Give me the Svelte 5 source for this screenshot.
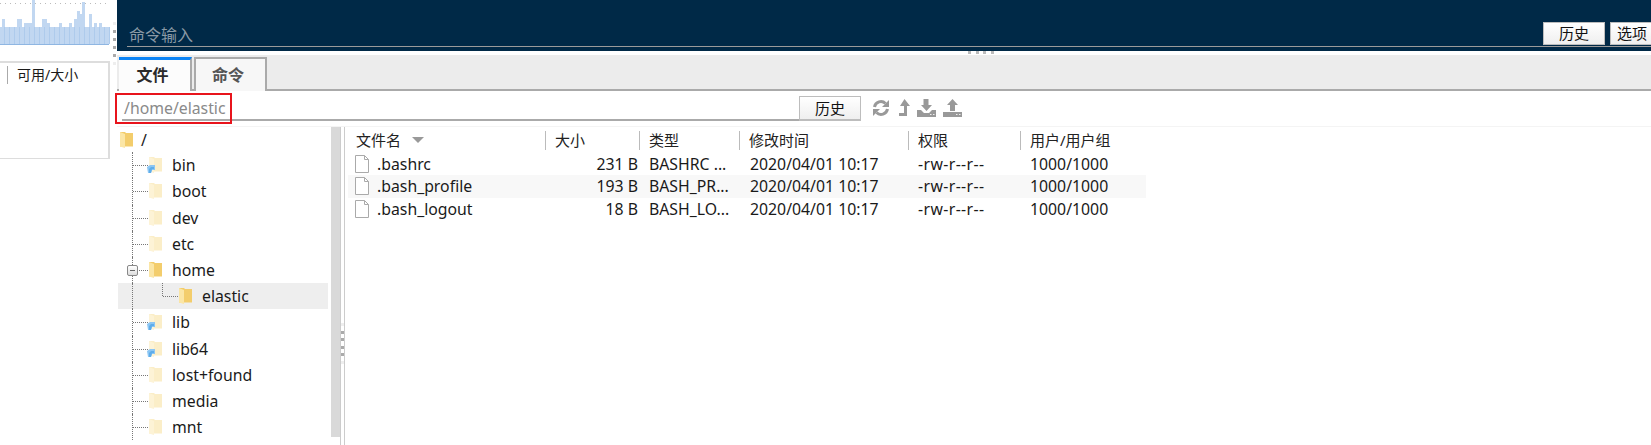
<script>
	// x, width, top of the bars that rise above the base level
	const peaks = [
		[2, 3, 19], [17, 5, 19], [24, 8, 23], [32, 3, 0], [42, 5, 19], [47, 3, 23],
		[59, 3, 23], [69, 3, 23], [74, 3, 19], [77, 3, 11], [80, 2, 14], [82, 3, 2],
		[89, 3, 14], [94, 3, 23], [99, 3, 23]
	];
	const gridLines = Array.from({ length: 22 }, (_, i) => 4 + i * 5);

	const tree = [
		{ name: 'bin', link: true },
		{ name: 'boot' },
		{ name: 'dev' },
		{ name: 'etc' },
		{ name: 'home', open: true },
		{ name: 'elastic', open: true, child: true },
		{ name: 'lib', link: true },
		{ name: 'lib64', link: true },
		{ name: 'lost+found' },
		{ name: 'media' },
		{ name: 'mnt' }
	];

	const files = [
		{ name: '.bashrc', size: '231 B', type: 'BASHRC ...' },
		{ name: '.bash_profile', size: '193 B', type: 'BASH_PR...' },
		{ name: '.bash_logout', size: '18 B', type: 'BASH_LO...' }
	];
</script>

{#snippet folder(open, link)}
	<svg class="folder" viewBox="0 0 13 16" width="13" height="16">
		<path d="M0 0h5l1 1h7v13.500H0z" fill={open ? '#f3cd6c' : '#fbeec8'} />
		<path d="M0 0l5 2v14l-5-1.500z" fill={open ? '#fbe6a6' : '#fdf3d6'} />
		{#if link}
			<path d="M-2 10l3-2 5 0v5H3l-1 3h-3z" fill="#8cc6f3" />
			<path d="M0 16v-4l2-2h3v2H3l-1 4z" fill="#5fadea" />
		{/if}
	</svg>
{/snippet}

<div class="app">
	<aside class="side">
		<svg class="chart" viewBox="0 0 110 45" width="110" height="45">
			<line x1="0" y1="3.500" x2="110" y2="3.500" stroke="#bbb" stroke-dasharray="1 4" />
			<rect x="0" y="27" width="109" height="18" fill="#c1d7f1" />
			{#each peaks as [x, w, top]}
				<rect {x} y={top} width={w} height={27 - top} fill="#c1d7f1" />
			{/each}
			{#each gridLines as x}
				<line x1={x + 0.5} y1="27" x2={x + 0.5} y2="44" stroke="#aecbec" />
			{/each}
			<line x1="0" y1="44.500" x2="109" y2="44.500" stroke="#8fb6e2" />
		</svg>
		<div class="partition">
			<span class="col-head">可用/大小</span>
		</div>
	</aside>

	<div class="grip-v">
		<i class="faint"></i><i></i><i></i><i></i><i></i><i class="faint"></i>
	</div>

	<main class="main">
		<section class="terminal">
			<div class="command">
				<span class="placeholder">命令输入</span>
				<button class="btn">历史</button>
				<button class="btn options">选项</button>
			</div>
		</section>

		<div class="grip-h"><i></i><i></i><i></i><i></i></div>

		<nav class="tabs">
			<div class="tab active">文件</div>
			<div class="tab">命令</div>
		</nav>

		<div class="pathbar">
			<div class="path">/home/elastic</div>
			<button class="btn">历史</button>
			<div class="tools">
				<svg class="refresh" viewBox="0 0 18 18" width="18" height="18">
					<path d="M2.500 8A6.500 6.500 0 0 1 13.500 4.500" fill="none" stroke="#999" stroke-width="3" />
					<path d="M17 1v7h-7z" fill="#999" />
					<path d="M15.500 10A6.500 6.500 0 0 1 4.500 13.500" fill="none" stroke="#999" stroke-width="3" />
					<path d="M1 17v-7h7z" fill="#999" />
				</svg>
				<svg viewBox="0 0 12 18" width="12" height="18">
					<path d="M6.500 0L12 7H9v10H1v-3h5V7H2z" fill="#999" />
				</svg>
				<svg viewBox="0 0 19 18" width="19" height="18">
					<path d="M6.500 0h5v6H15l-5.500 6L4 6h2.500z" fill="#999" />
					<path d="M0 11h4l3 3h5l3-3h4v7H0z" fill="#999" />
					<path d="M13 15.500h1.500M16 15.500h1.500" stroke="#eee" />
				</svg>
				<svg viewBox="0 0 19 18" width="19" height="18">
					<path d="M9.500 0L15 6h-3v6H7V6H4z" fill="#999" />
					<path d="M0 13h19v5H0z" fill="#999" />
					<path d="M13 15.500h1.500M16 15.500h1.500" stroke="#eee" />
				</svg>
			</div>
		</div>

		<div class="browser">
			<div class="tree">
				<div class="root-row">
					{@render folder(true, false)}
					<span class="root-name">/</span>
				</div>
				{#each tree as node}
					<div class="node" class:child={node.child}>
						<span class="rail"></span>
						{#if node.child}<span class="rail inner"></span>{/if}
						<span class="tick"></span>
						{@render folder(node.open, node.link)}
						<span class="label">{node.name}</span>
						{#if node.name === 'home'}<span class="toggle"></span>{/if}
					</div>
				{/each}
			</div>
			<div class="scrollbar"></div>
			<div class="grip-tree">
				<i class="faint"></i><i></i><i></i><i></i><i></i><i class="faint"></i>
			</div>

			<div class="list">
				<div class="head row">
					<span class="name-head">文件名<b class="sort"></b></span>
					<span>大小</span>
					<span>类型</span>
					<span>修改时间</span>
					<span>权限</span>
					<span>用户/用户组</span>
				</div>
				{#each files as file, i}
					<div class="row file" class:alt={i === 1}>
						<span class="file-name">
							<svg viewBox="0 0 14 18" width="14" height="18">
								<path d="M.5 .5h9l4 4v13H.5z" fill="#fff" stroke="#aaa" />
								<path d="M9.500 .5v4h4" fill="none" stroke="#aaa" />
							</svg>
							{file.name}
						</span>
						<span class="size">{file.size}</span>
						<span>{file.type}</span>
						<span class="modified">2020/04/01 10:17</span>
						<span class="perm">-rw-r--r--</span>
						<span>1000/1000</span>
					</div>
				{/each}
			</div>
		</div>
	</main>
</div>

<style>
	:global(body) {
		margin: 0;
		background: #fff;
	}
	.app {
		display: flex;
		width: 1651px;
		height: 445px;
		overflow: hidden;
		font-family: "Noto Sans", "Noto Sans CJK SC", sans-serif;
		font-size: 15px;
		color: #1a1a1a;
	}
	.side {
		flex: none;
		width: 110px;
	}
	.chart {
		display: block;
	}
	.partition {
		height: 98px;
		margin-top: 16px;
		border-top: 2px solid #ddd;
		border-bottom: 1px solid #ddd;
		border-right: 2px solid #ddd;
		box-sizing: border-box;
		padding-top: 3px;
	}
	.col-head {
		display: block;
		margin-left: 7px;
		padding-left: 9px;
		border-left: 1px solid #aaa;
		font-size: 14px;
		line-height: 18px;
		white-space: nowrap;
	}
	.grip-v {
		flex: none;
		width: 7px;
		box-sizing: border-box;
		padding: 22px 0 0 3px;
		display: flex;
		flex-direction: column;
		gap: 5px;
	}
	.grip-v i,
	.grip-tree i,
	.grip-h i {
		display: block;
		width: 3px;
		height: 3px;
		background: #aaa;
	}
	i.faint {
		background: #eee !important;
	}
	.main {
		flex: 1;
		min-width: 0;
		display: flex;
		flex-direction: column;
		position: relative;
	}
	.terminal {
		flex: none;
		height: 51px;
		background: #002947;
		padding-left: 10px;
	}
	.command {
		height: 47px;
		box-sizing: border-box;
		border-bottom: 1px solid #9a9a9a;
		display: flex;
		align-items: flex-end;
	}
	.placeholder {
		flex: 1;
		padding: 0 0 0 2px;
		font-size: 16px;
		line-height: 22px;
		color: #8b9aa6;
	}
	.btn {
		all: unset;
		box-sizing: border-box;
		width: 62px;
		height: 23px;
		background: linear-gradient(#fff, #efefef);
		border: 1px solid #bdbdbd;
		text-align: center;
		font-size: 15px;
		line-height: 21px;
		color: #111;
		flex: none;
	}
	.command .btn {
		margin-bottom: 1px;
	}
	.command .options {
		margin-left: 5px;
		width: 41px;
		border-right: 0;
		text-align: left;
		padding-left: 6px;
	}
	.grip-h {
		position: absolute;
		top: 51px;
		left: 851px;
		display: flex;
		gap: 4.500px;
	}
	.grip-h i {
		background: #bbb;
	}
	.tabs {
		flex: none;
		height: 36px;
		margin-top: 4px;
		box-sizing: border-box;
		background: #ececec;
		border-bottom: 2px solid #aaa;
		padding: 2px 0 0 2px;
		display: flex;
		gap: 2px;
	}
	.tab {
		width: 73px;
		height: 34px;
		box-sizing: border-box;
		border: 2px solid #aaa;
		border-bottom: 0;
		background: #f7f7f7;
		padding-right: 5px;
		text-align: center;
		font-weight: 700;
		font-size: 16px;
		line-height: 32px;
		color: #555;
	}
	.tab.active {
		background: #fcfcfc;
		border-left: 0;
		border-top: 3px solid #0b84f5;
		padding-right: 4px;
		line-height: 31px;
		color: #2a2a2a;
	}
	.pathbar {
		flex: none;
		height: 35px;
		display: flex;
		align-items: flex-start;
		position: relative;
		box-sizing: border-box;
		padding: 5px 0 0 5px;
	}
	.path {
		width: 677px;
		height: 25px;
		box-sizing: border-box;
		border-bottom: 2px solid #aaa;
		padding-left: 2px;
		font-size: 15.800px;
		line-height: 24px;
		color: #8a8a8a;
	}
	/* red annotation box drawn over the screenshot */
	.path::after {
		content: "";
		position: absolute;
		left: -2px;
		top: 2px;
		width: 117px;
		height: 31px;
		box-sizing: border-box;
		border: 2px solid #e8141c;
	}
	.pathbar .btn {
		border-bottom-width: 2px;
		height: 25px;
	}
	.tools {
		display: flex;
		gap: 7px;
		margin: 3px 0 0 11px;
	}
	.tools svg {
		display: block;
	}
	.tools .refresh {
		margin-right: 1px;
	}
	.browser {
		flex: 1;
		min-height: 0;
		display: flex;
		border-top: 1px solid #f4f4f4;
	}
	.tree {
		flex: none;
		width: 214px;
		font-size: 15.800px;
	}
	.root-row,
	.node {
		display: flex;
		align-items: center;
		position: relative;
	}
	.root-row {
		height: 25.200px;
		padding-left: 3px;
	}
	.node {
		height: 26.200px;
		padding-left: 32px;
	}
	.root-name {
		margin-left: 8px;
	}
	.folder {
		flex: none;
		overflow: visible;
	}
	.node.child {
		background: #eee;
		margin: 0 3px 0 1px;
		padding-left: 61px;
	}
	.label {
		margin-left: 10px;
		white-space: nowrap;
	}
	.rail {
		position: absolute;
		left: 15px;
		top: 0;
		bottom: 0;
		border-left: 1px dotted #777;
	}
	.child .rail {
		left: 14px;
	}
	.child .rail.inner {
		left: 44px;
		bottom: 50%;
	}
	.tick {
		position: absolute;
		left: 16px;
		top: 50%;
		width: 15px;
		border-top: 1px dotted #777;
	}
	.child .tick {
		left: 45px;
	}
	.toggle {
		position: absolute;
		left: 10px;
		top: 8px;
		width: 11px;
		height: 11px;
		box-sizing: border-box;
		border: 1px solid #888;
		border-radius: 2px;
		background: linear-gradient(#fff, #ddd);
	}
	.toggle::after {
		content: "";
		position: absolute;
		left: 2px;
		right: 2px;
		top: 4px;
		height: 1px;
		background: #666;
	}
	.scrollbar {
		flex: none;
		width: 9px;
		height: 310px;
		background: #d9d9d9;
	}
	.grip-tree {
		flex: none;
		width: 5px;
		box-sizing: border-box;
		border-left: 1px solid #ccc;
		border-right: 1px solid #ccc;
		padding: 196px 0 0 0;
		display: flex;
		flex-direction: column;
		gap: 4.500px;
	}
	.grip-tree i {
		width: 3px;
	}
	.list {
		flex: 1;
		padding: 4px 0 0 3px;
	}
	.row {
		display: grid;
		grid-template-columns: 197px 94px 100px 169px 112px 126px;
		width: 798px;
	}
	.head {
		height: 19px;
		line-height: 19px;
		margin-bottom: 2.500px;
		color: #222;
	}
	.head span {
		padding-left: 9px;
		border-left: 1px solid #bbb;
		white-space: nowrap;
	}
	.head .name-head {
		border-left: 0;
		padding-left: 8px;
	}
	.sort {
		display: inline-block;
		margin-left: 11px;
		vertical-align: 3px;
		border-left: 6px solid transparent;
		border-right: 6px solid transparent;
		border-top: 6px solid #999;
	}
	.file {
		height: 22.600px;
		line-height: 22.600px;
		font-size: 15.800px;
		white-space: nowrap;
	}
	.file span {
		padding-left: 10px;
	}
	.file .file-name {
		padding-left: 7px;
		display: flex;
		align-items: center;
		gap: 8px;
	}
	.file .size {
		padding: 0 1px 0 0;
		text-align: right;
	}
	.file .modified {
		padding-left: 11px;
	}
	.file .perm {
		letter-spacing: 0.400px;
	}
	.alt {
		background: #f8f8f8;
	}
</style>
